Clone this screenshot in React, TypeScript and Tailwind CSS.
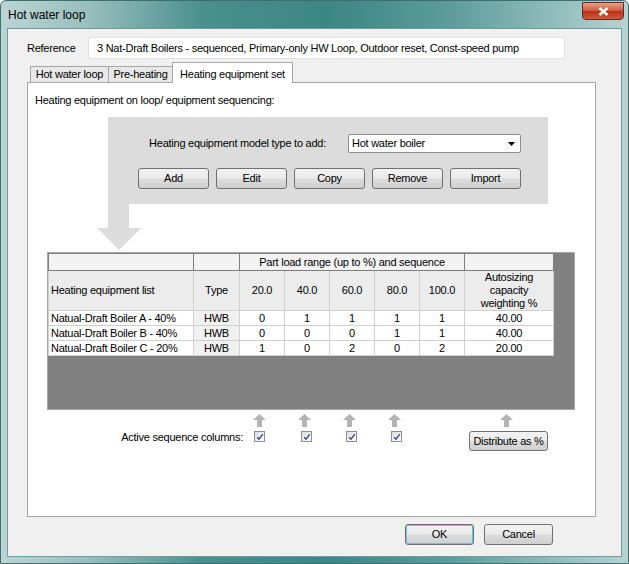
import React from "react";

const cols = [145, 46, 45, 45, 45, 45, 45, 89];

const btnCls =
  "flex items-center justify-center rounded-[3px] border border-[#707070] bg-[linear-gradient(#f2f2f2,#ebebeb_48%,#dddddd_52%,#cfcfcf)] text-black";

function Button({ label, w, focus }: { label: string; w: number; focus?: boolean }) {
  return (
    <div
      className={
        btnCls +
        (focus ? " border-[#3c7fb1] shadow-[inset_0_0_0_1px_#5ac8f5]" : "")
      }
      style={{ width: w, height: 21 }}
    >
      {label}
    </div>
  );
}

function UpArrow() {
  return (
    <svg width="13" height="13" viewBox="0 0 13 13">
      <polygon points="6.5,0 13,6 9,6 9,13 4,13 4,6 0,6" fill="#b4b4b4" />
    </svg>
  );
}

function Check() {
  return (
    <div className="flex h-[11px] w-[11px] items-center justify-center border border-[#8f8f8f] bg-[linear-gradient(135deg,#dcdcdc,#ffffff)]">
      <svg width="8" height="8" viewBox="0 0 8 8">
        <path d="M1.2 4.2 L3 6.2 L6.8 1.2" fill="none" stroke="#31499a" strokeWidth="1.4" />
      </svg>
    </div>
  );
}

const rows = [
  ["Natual-Draft Boiler A - 40%", "HWB", "0", "1", "1", "1", "1", "40.00"],
  ["Natual-Draft Boiler B - 40%", "HWB", "0", "0", "0", "1", "1", "40.00"],
  ["Natual-Draft Boiler C - 20%", "HWB", "1", "0", "2", "0", "2", "20.00"],
];

export default function App() {
  return (
    <div
      className="flex h-[564px] w-[629px] flex-col overflow-hidden rounded-t-[6px] border border-[#3d6f6e] bg-[linear-gradient(90deg,#bcd4d4_0%,#98bebd_14%,#4a908d_32%,#3c8683_52%,#5d9d9b_72%,#9cc4c3_92%,#b7d2d2_100%)] text-[11px] tracking-[-0.25px] text-black"
      style={{ fontFamily: '"Liberation Sans", Arial, sans-serif' }}
    >
      <div className="flex h-[27px] shrink-0 items-start justify-between">
        <span className="pl-[7px] pt-[5px] text-[12px] tracking-normal text-black">Hot water loop</span>
        <div className="mr-[4px] mt-[1px] flex h-[18px] w-[42px] items-center justify-center rounded-b-[4px] border border-[#6b2a20] bg-[linear-gradient(#e8a08c,#d25a40_48%,#bb2f17_52%,#cf5a3c)]">
          <svg width="11" height="9" viewBox="0 0 11 9">
            <path d="M1.5 1 L9.5 8 M9.5 1 L1.5 8" stroke="white" strokeWidth="2.4" />
          </svg>
        </div>
      </div>

      <div className="mx-[6px] mb-[6px] flex flex-1 flex-col border border-[#6f9e9d] bg-[#f0f0f0] pl-[19px] pt-[8px]">
        {/* reference row */}
        <div className="flex h-[22px] items-center">
          <span className="w-[61px]">Reference</span>
          <div className="flex h-[22px] w-[477px] items-center border border-[#e2e2e2] bg-white pl-[8px]">
            3 Nat-Draft Boilers - sequenced, Primary-only HW Loop, Outdoor reset, Const-speed pump
          </div>
        </div>

        {/* tabs */}
        <div className="mt-[3px] flex h-[20px] items-end pl-[3px]">
          <div className="flex h-[16px] w-[79px] items-center justify-center border border-b-0 border-[#a7a7a7] bg-[#e8e8e8]">
            Hot water loop
          </div>
          <div className="-ml-px flex h-[16px] w-[65px] items-center justify-center border border-b-0 border-[#a7a7a7] bg-[#e8e8e8]">
            Pre-heating
          </div>
          <div className="relative z-10 -mb-px -ml-px flex h-[21px] w-[121px] items-start justify-center border border-b-0 border-[#a7a7a7] bg-white pt-[3px]">
            Heating equipment set
          </div>
        </div>

        {/* panel */}
        <div className="flex h-[435px] w-[569px] flex-col border border-[#a7a7a7] bg-white">
          <div className="pl-[7px] pt-[9px] leading-[16px]">
            Heating equipment on loop/ equipment sequencing:
          </div>

          <div className="ml-[80px] mt-[9px] flex h-[87px] w-[440px] flex-col bg-[#dcdcdc]">
            <div className="flex items-center justify-end gap-[22px] pr-[27px] pt-[17px]">
              <span>Heating equipment model type to add:</span>
              <div className="flex h-[19px] w-[173px] items-center justify-between rounded-[2px] border border-[#8e8f8f] bg-white pl-[3px] pr-[5px]">
                <span>Hot water boiler</span>
                <svg width="7" height="4" viewBox="0 0 7 4">
                  <polygon points="0,0 7,0 3.5,4" fill="#000" />
                </svg>
              </div>
            </div>
            <div className="mt-[15px] flex gap-[7px] pl-[30px]">
              {["Add", "Edit", "Copy", "Remove", "Import"].map((b) => (
                <Button key={b} label={b} w={71} />
              ))}
            </div>
          </div>

          <svg className="ml-[69px] block" width="44" height="46" viewBox="0 0 44 46">
            <polygon points="11,0 32,0 32,24 44,24 22,46 0,24 11,24" fill="#dcdcdc" />
          </svg>

          {/* grid */}
          <div className="ml-[19px] mt-[2px] h-[158px] w-[528px] border border-[#a8a8a8] bg-[#808080]">
            <table className="table-fixed border-collapse border-b border-r border-[#3c3c3c] bg-white leading-[13px]">
              <colgroup>
                {cols.map((c, i) => (
                  <col key={i} style={{ width: c }} />
                ))}
              </colgroup>
              <tbody>
                <tr className="h-[17px] bg-[#f3f3f3]">
                  <td className="border border-[#7d7d7d]"></td>
                  <td className="border border-[#7d7d7d]"></td>
                  <td colSpan={5} className="border border-[#7d7d7d] text-center">
                    Part load range (up to %) and sequence
                  </td>
                  <td className="border border-[#7d7d7d]"></td>
                </tr>
                <tr className="h-[39px] bg-[#ececec]">
                  <td className="border border-[#d0d0d0] pl-[2px]">Heating equipment list</td>
                  <td className="border border-[#d0d0d0] text-center">Type</td>
                  {["20.0", "40.0", "60.0", "80.0", "100.0"].map((h) => (
                    <td key={h} className="border border-[#d0d0d0] text-center">
                      {h}
                    </td>
                  ))}
                  <td className="border border-[#d0d0d0] text-center">
                    Autosizing
                    <br />
                    capacity
                    <br />
                    weighting %
                  </td>
                </tr>
                {rows.map((r) => (
                  <tr key={r[0]} className="h-[15px]">
                    {r.map((c, i) => (
                      <td
                        key={i}
                        className={
                          "border border-[#d0d0d0] " +
                          (i === 0 ? "pl-[2px]" : "text-center") +
                          (i === 1 ? " bg-[#f1f1f1]" : "")
                        }
                      >
                        {c}
                      </td>
                    ))}
                  </tr>
                ))}
              </tbody>
            </table>
          </div>

          {/* arrows */}
          <div className="ml-[18px] mt-[4px] flex h-[13px]">
            {cols.map((c, i) => (
              <div key={i} className="flex justify-center" style={{ width: c }}>
                {(i >= 2 && i <= 5) || i === 7 ? <UpArrow /> : null}
              </div>
            ))}
          </div>

          {/* active columns */}
          <div className="ml-[18px] mt-[4px] flex items-start">
            <span className="w-[197px] pt-px text-right leading-[11px]">Active sequence columns:</span>
            <div className="ml-[11px]"><Check /></div>
            <div className="ml-[36px]"><Check /></div>
            <div className="ml-[34px]"><Check /></div>
            <div className="ml-[34px]"><Check /></div>
            <div className="ml-[67px] flex h-[20px] w-[79px] items-center justify-center rounded-[3px] border border-[#707070] bg-[linear-gradient(#f2f2f2,#ebebeb_48%,#dddddd_52%,#cfcfcf)]">
              Distribute as %
            </div>
          </div>
        </div>

        {/* dialog buttons */}
        <div className="mt-[7px] flex justify-end gap-[10px] pr-[68px]">
          <Button label="OK" w={69} focus />
          <Button label="Cancel" w={69} />
        </div>
      </div>
    </div>
  );
}
